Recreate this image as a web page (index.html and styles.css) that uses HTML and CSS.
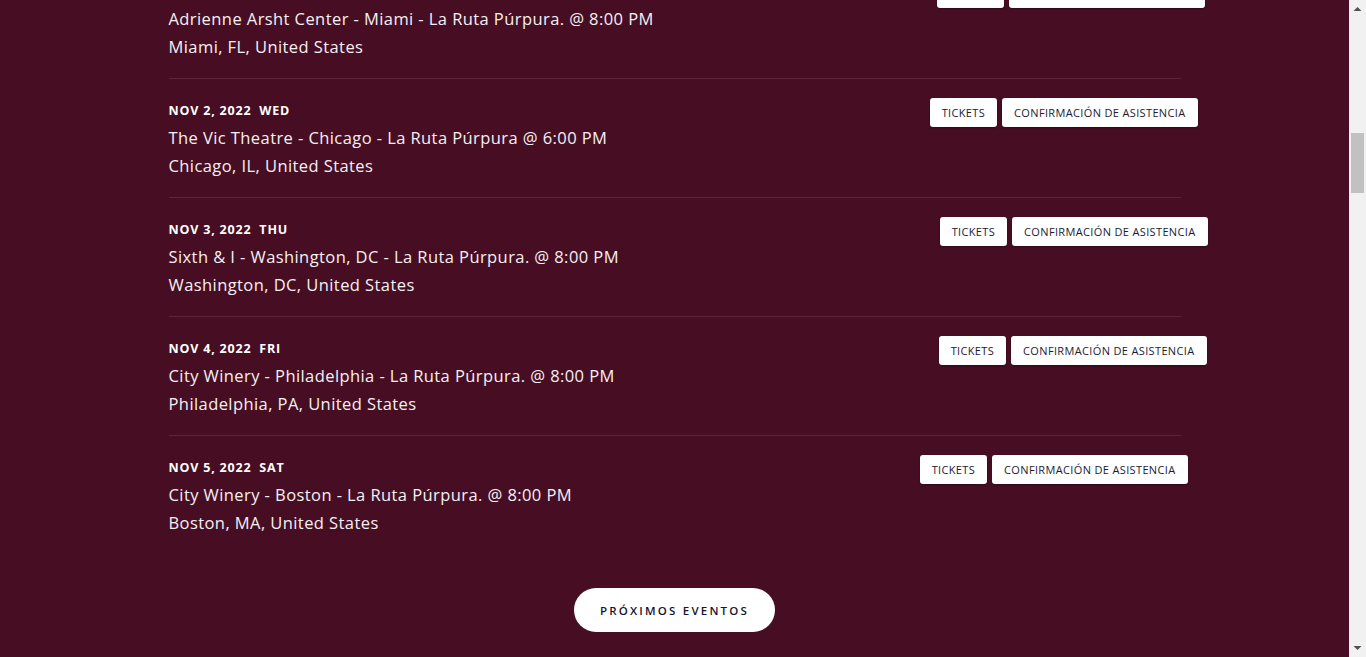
FILE: index.html
```html
<!DOCTYPE html>
<html lang="es">
<head>
<meta charset="utf-8">
<title>La Ruta Púrpura - Eventos</title>
<link rel="stylesheet" href="styles.css">
</head>
<body>
<div class="window">
  <div class="viewport" id="viewport">
    <main class="events">
      <ul class="event-list">
        <li class="event">
          <div class="event-info">
            <div class="event-date">OCT 31, 2022<span class="event-day">MON</span></div>
            <div class="event-title">Adrienne Arsht Center - Miami - La Ruta Púrpura. @ 8:00 PM</div>
            <div class="event-place">Miami, FL, United States</div>
          </div>
          <div class="event-actions shift-1"><a class="btn">Tickets</a><a class="btn">Confirmación de asistencia</a></div>
        </li>
        <li class="event" id="anchor-event">
          <div class="event-info">
            <div class="event-date">NOV 2, 2022<span class="event-day">WED</span></div>
            <div class="event-title">The Vic Theatre - Chicago - La Ruta Púrpura @ 6:00 PM</div>
            <div class="event-place">Chicago, IL, United States</div>
          </div>
          <div class="event-actions shift-2"><a class="btn">Tickets</a><a class="btn">Confirmación de asistencia</a></div>
        </li>
        <li class="event">
          <div class="event-info">
            <div class="event-date">NOV 3, 2022<span class="event-day">THU</span></div>
            <div class="event-title">Sixth &amp; I - Washington, DC - La Ruta Púrpura. @ 8:00 PM</div>
            <div class="event-place">Washington, DC, United States</div>
          </div>
          <div class="event-actions shift-3"><a class="btn">Tickets</a><a class="btn">Confirmación de asistencia</a></div>
        </li>
        <li class="event">
          <div class="event-info">
            <div class="event-date">NOV 4, 2022<span class="event-day">FRI</span></div>
            <div class="event-title">City Winery - Philadelphia - La Ruta Púrpura. @ 8:00 PM</div>
            <div class="event-place">Philadelphia, PA, United States</div>
          </div>
          <div class="event-actions shift-4"><a class="btn">Tickets</a><a class="btn">Confirmación de asistencia</a></div>
        </li>
        <li class="event">
          <div class="event-info">
            <div class="event-date">NOV 5, 2022<span class="event-day">SAT</span></div>
            <div class="event-title">City Winery - Boston - La Ruta Púrpura. @ 8:00 PM</div>
            <div class="event-place">Boston, MA, United States</div>
          </div>
          <div class="event-actions shift-5"><a class="btn">Tickets</a><a class="btn">Confirmación de asistencia</a></div>
        </li>
      </ul>
      <div class="more">
        <a class="btn-more">Próximos eventos</a>
      </div>
    </main>
  </div>
  <div class="scrollbar" aria-hidden="true">
    <div class="sb-arrow">
      <svg width="17" height="17" viewBox="0 0 17 17"><path d="M4.5 11 L8.5 7 L12.5 11 Z" fill="#505050"/></svg>
    </div>
    <div class="sb-track">
      <div class="sb-thumb"></div>
    </div>
    <div class="sb-arrow">
      <svg width="17" height="17" viewBox="0 0 17 17"><path d="M4.5 6 L12.5 6 L8.5 10 Z" fill="#505050"/></svg>
    </div>
  </div>
</div>
<script src="script.js"></script>
</body>
</html>
```
FILE: styles.css
```css
* { box-sizing: border-box; }
html, body { margin: 0; padding: 0; height: 100%; }
body {
  background: #470e23;
  color: #f4eef1;
  font-family: "Open Sans", "Noto Sans", sans-serif;
  overflow: hidden;
}
.window {
  display: flex;
  height: 100vh;
}
.viewport {
  flex: 1;
  height: 100%;
  overflow-y: scroll;
  scrollbar-width: none;
  background: #470e23;
}
.viewport::-webkit-scrollbar { display: none; }

.scrollbar {
  flex: none;
  width: 17px;
  display: flex;
  flex-direction: column;
  background: #f1f1f1;
}
.sb-arrow { height: 17px; flex: none; }
.sb-arrow svg { display: block; }
.sb-track {
  flex: 1;
  position: relative;
}
.sb-thumb {
  position: absolute;
  left: 2px;
  right: 2px;
  top: 116px;
  height: 60px;
  background: #c1c1c1;
}

.events {
  max-width: 1012px;
  margin: 0 auto;
}
.event-list { list-style: none; margin: 0; padding: 0; }
.event {
  display: flex;
  justify-content: space-between;
  align-items: flex-start;
  padding: 19px 0 17px;
  border-top: 1px solid #5a2638;
}
.event-date {
  font-size: 12.5px;
  font-weight: 700;
  line-height: 26px;
  letter-spacing: 0.8px;
  color: #ffffff;
}
.event-day { margin-left: 8px; }
.event-title, .event-place {
  font-size: 16.5px;
  font-weight: 500;
  line-height: 28px;
  letter-spacing: 0.42px;
  color: #f5f0f3;
}
.event-actions {
  display: flex;
  gap: 5px;
  flex: none;
}
.shift-1 { margin-right: -24px; }
.shift-2 { margin-right: -17px; }
.shift-3 { margin-right: -27px; }
.shift-4 { margin-right: -26px; }
.shift-5 { margin-right: -7px; }
.btn {
  display: inline-flex;
  align-items: center;
  height: 29px;
  padding: 0 12px;
  background: #ffffff;
  color: #1d1a33;
  border-radius: 3px;
  box-shadow: 0 1px 2px rgba(0,0,0,0.35);
  font-size: 11px;
  letter-spacing: 0.35px;
  text-transform: uppercase;
  white-space: nowrap;
}
.more {
  display: flex;
  justify-content: center;
  padding: 34px 0 60px;
}
.btn-more {
  display: inline-flex;
  align-items: center;
  justify-content: center;
  width: 201px;
  height: 44px;
  border-radius: 22px;
  background: #ffffff;
  color: #16152b;
  font-size: 11.5px;
  font-weight: 600;
  letter-spacing: 2.2px;
  text-transform: uppercase;
}
```
FILE: script.js
```js
(function () {
  var vp = document.getElementById('viewport');
  var anchor = document.getElementById('anchor-event');
  var rect = anchor.getBoundingClientRect();
  vp.scrollTop = vp.scrollTop + rect.top - 78;
})();
```
